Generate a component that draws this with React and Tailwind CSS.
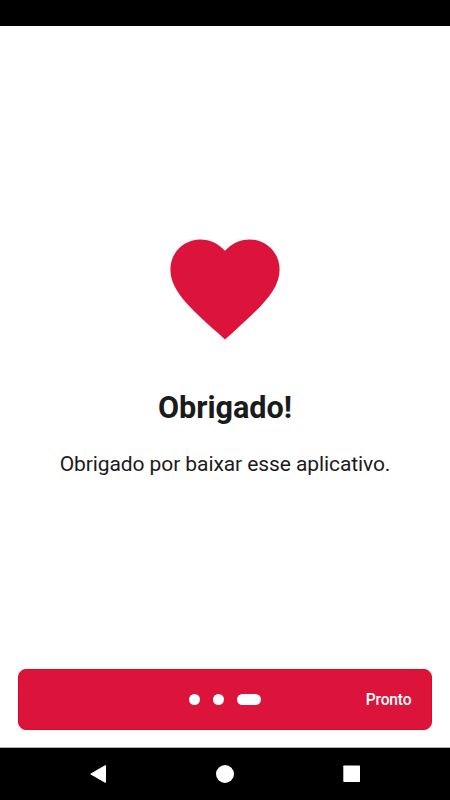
const dots = [
  { id: 'welcome', active: false },
  { id: 'features', active: false },
  { id: 'thanks', active: true },
];

function HeartIcon() {
  return (
    <svg viewBox="0 0 24 24" className="h-[131px] w-[132px]" fill="currentColor">
      <path d="M12 21.35l-1.45-1.32C5.4 15.36 2 12.28 2 8.5 2 5.42 4.42 3 7.5 3c1.74 0 3.41.81 4.5 2.09C13.09 3.81 14.76 3 16.5 3 19.58 3 22 5.42 22 8.5c0 3.78-3.4 6.86-8.55 11.54L12 21.35z" />
    </svg>
  );
}

function Pager() {
  return (
    <nav className="mx-[17.700px] mb-[17px] grid h-[61px] grid-cols-3 items-center rounded-lg border border-[#e00a20] bg-[#dc143c]">
      <div />
      <div className="flex items-center justify-center gap-[13px]">
        {dots.map(dot => (
          <span
            key={dot.id}
            className={dot.active ? 'h-[11px] w-6 rounded-full bg-white' : 'size-[11px] rounded-full bg-white'}
          />
        ))}
      </div>
      <button className="justify-self-end pr-5 text-[15.600px] font-medium leading-4 tracking-[-0.2px] text-white">
        Pronto
      </button>
    </nav>
  );
}

function SystemBar() {
  return (
    <footer className="h-[53px] shrink-0 border-t border-[#b0b0b0] bg-black text-white">
      <svg viewBox="0 0 450 52" className="h-[52px] w-[450px]" fill="currentColor">
        <path d="M105.500 17.500v17L90.800 26z" stroke="currentColor" strokeLinejoin="round" />
        <circle cx="225" cy="26" r="9" />
        <rect x="343.300" y="17.500" width="16.700" height="16.500" rx="0.700" />
      </svg>
    </footer>
  );
}

export default function App() {
  return (
    <div className="flex h-[800px] w-[450px] flex-col overflow-hidden bg-white font-[Roboto,sans-serif]">
      <header className="h-[26px] shrink-0 bg-black" />
      <main className="flex flex-1 flex-col items-center pt-[197px] text-center">
        <div className="text-[#dc143c]">
          <HeartIcon />
        </div>
        <h1 className="mt-9 text-[30.600px] font-bold leading-9 text-[#1b1b1b]">Obrigado!</h1>
        <p className="mt-6 whitespace-nowrap text-[21px] leading-7 tracking-[-0.09px] text-[#1b1b1b]">
          Obrigado por baixar esse aplicativo.
        </p>
      </main>
      <Pager />
      <SystemBar />
    </div>
  );
}
